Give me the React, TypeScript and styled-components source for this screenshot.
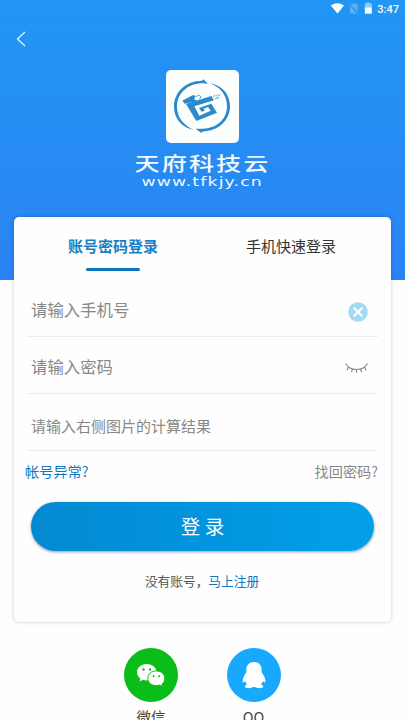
import React from "react";
import styled, { createGlobalStyle } from "styled-components";

const GlobalStyle = createGlobalStyle`
  * { box-sizing: border-box; }
  html, body { margin: 0; padding: 0; height: 720px; overflow: hidden; background: #fff; }
  body { font-family: "Noto Sans CJK SC", "Noto Sans", sans-serif; }
  button { font-family: inherit; padding: 0; border: 0; background: none; }
  svg { display: block; }
`;

const Screen = styled.div`
  width: 405px;
  height: 720px;
  overflow: hidden;
  background: #fefefe;
`;

const Header = styled.header`
  height: 280px;
  display: flex;
  flex-direction: column;
  align-items: center;
  background: linear-gradient(180deg, #2196f3 0%, #2a83f4 100%);
`;

const StatusBar = styled.div`
  align-self: stretch;
  height: 18px;
  display: flex;
  justify-content: flex-end;
  padding-right: 6px;
`;

const Clock = styled.span`
  color: #f4faff;
  font: 500 11px/19px Roboto, sans-serif;
  margin-left: 4px;
`;

const NavBar = styled.nav`
  align-self: stretch;
  height: 42px;
  display: flex;
  align-items: center;
  padding-left: 16px;
`;

const LogoTile = styled.div`
  width: 73px;
  height: 73px;
  margin-top: 10px;
  flex: none;
  border-radius: 5px;
  background: #fdfefe;
`;

const BrandName = styled.div`
  height: 24px;
  margin-top: 8px;
  color: #f3f9ff;
  font-size: 19px;
  font-weight: 500;
  line-height: 24px;
  letter-spacing: 1.6px;
  margin-right: -1px;
  white-space: nowrap;
  transform: scaleX(1.32);
`;

const BrandUrl = styled.div`
  height: 14px;
  color: #f0f7ff;
  font: 12px/14px "DejaVu Sans", sans-serif;
  letter-spacing: 0.8px;
  white-space: nowrap;
  transform: scaleX(1.44);
`;

const Card = styled.main`
  position: relative;
  width: 377px;
  height: 405px;
  margin: -63px 14px 0;
  border-radius: 5px;
  background: #fefefe;
  box-shadow: 0 0 3px 1px rgba(0, 0, 0, 0.13);
`;

const Tabs = styled.div`
  display: flex;
  height: 63px;
  padding: 0 11px 0 10px;
`;

const Tab = styled.button<{ $active?: boolean }>`
  flex: 1;
  display: flex;
  flex-direction: column;
  align-items: center;
  padding-top: 17px;
  font-size: 15px;
  line-height: 24px;
  font-weight: ${(p) => (p.$active ? 700 : 400)};
  color: ${(p) => (p.$active ? "#177fc6" : "#333")};
`;

const TabLine = styled.span`
  width: 54px;
  height: 3px;
  margin-top: 10px;
  border-radius: 2px;
  background: #0c75bf;
`;

const Field = styled.div<{ $size: number; $top?: number }>`
  display: flex;
  align-items: center;
  justify-content: space-between;
  height: 57px;
  margin: 0 13px;
  padding: ${(p) => p.$top || 0}px 10px 0 4px;
  border-bottom: 1px solid #ededed;
  color: #888;
  font-size: ${(p) => p.$size}px;
  line-height: 24px;
`;

const FieldButton = styled.button`
  padding-top: 5px;
`;

const Links = styled.div`
  display: flex;
  justify-content: space-between;
  height: 51px;
  padding: 8px 13px 0 11px;
  font-size: 14.2px;
  line-height: 24px;
`;

const Link = styled.a<{ $accent?: boolean }>`
  color: ${(p) => (p.$accent ? "#0c78be" : "#888")};
`;

const Submit = styled.button`
  display: block;
  width: 343px;
  height: 49px;
  margin: 0 0 0 17px;
  border-radius: 25px;
  background: linear-gradient(90deg, #0389d1, #02a0e9);
  box-shadow: 0 1px 3px rgba(0, 30, 70, 0.45);
  color: #fff;
  font-size: 19.5px;
  line-height: 48px;
  padding-bottom: 1px;
`;

const Signup = styled.p`
  margin: 18px 1px 0 0;
  text-align: center;
  color: #555;
  font-size: 12.7px;
  line-height: 24px;
`;

const Social = styled.footer`
  display: flex;
  justify-content: center;
  gap: 48.5px;
  margin: 26px 0.5px 0 0;
`;

const Provider = styled.div`
  width: 54px;
  display: flex;
  flex-direction: column;
  align-items: center;
  color: #444;
  font-size: 14.5px;
  line-height: 24px;
`;

const Disc = styled.div<{ $color: string }>`
  width: 54px;
  height: 54px;
  margin-bottom: 3px;
  border-radius: 50%;
  background: ${(p) => p.$color};
`;

const StatusIcons = () => (
  <svg width="43" height="18" viewBox="330 0 43 18">
    <path d="M330.8 5.5Q337.5 1 344 5.5L337.5 13.6Z" fill="#fff" />
    <path d="M350 5L352 3.8H357.5V13.5H350Z" fill="#5db2f7" />
    <path d="M349.5 4.5L358.5 14" stroke="#2495f3" strokeWidth="1.4" />
    <path d="M366.5 2.5h3v1h2.3V8h-7V3.5h1.7Z" fill="#8ecaf9" />
    <path d="M364.8 7.5h7V13.7h-7Z" fill="#fff" />
  </svg>
);

const BackIcon = () => (
  <svg width="11" height="16" viewBox="0 0 11 16">
    <path d="M9 1L1.5 8L9 15" fill="none" stroke="#e8f5ff" strokeWidth="1.25" />
  </svg>
);

const BrandMark = () => (
  <svg width="73" height="73" viewBox="123 29 219 219" fill="#2b8bca">
    <path d="M249 70L235 57L231 61C181 61 147 96 147 139C147 174 169 201 207 209C177 196 156 171 156 139C156 98 190 68 235 69Z" />
    <path d="M254 69C285 79 306 105 306 137C306 176 277 204 232 205L212 205L229 218L232 214C282 211 315 180 315 137C315 103 292 75 254 69Z" />
    <path d="M172 121L204 104L212 107L207 117L217 120L207 125L179 130Z" />
    <path d="M183 131L259 107L267 120L208 138L223 166L257 151L249 140L236 145L239 151L230 154L222 143L259 130L276 157L214 182Z" />
    <path d="M213 109L221 104L228 109L223 117M264 110L270 104M273 109L279 102M281 108L285 102M270 115L282 112" fill="none" stroke="#2b8bca" strokeWidth="2.5" />
  </svg>
);

const ClearIcon = () => (
  <svg width="20" height="20" viewBox="0 0 20 20">
    <circle cx="10" cy="10" r="9.8" fill="#a2d9f3" />
    <path d="M6.2 6.2L13.8 13.8M13.8 6.2L6.2 13.8" stroke="#fff" strokeWidth="2.2" strokeLinecap="round" />
  </svg>
);

const ClosedEyeIcon = () => (
  <svg width="23" height="12" viewBox="0 0 23 12" fill="none" stroke="#888" strokeWidth="1.1">
    <path d="M.5 .5C5 8.5 18 8.5 22.5 .5M3.4 4L2 7.2M7.4 6L6.6 9.2M11.5 6.5V9.8M15.6 6L16.4 9.2M19.6 4L21 7.2" />
  </svg>
);

const WechatIcon = () => (
  <svg width="54" height="54" viewBox="0 0 54 54" fill="#fff">
    <path d="M22.7 16C17 16 13 19.8 13 24.3C13 26.9 14.3 29.1 16.4 30.6L15.6 33.4L19 31.7Q20.8 32.4 23 32.4C28.5 32.4 32.6 28.8 32.6 24.3C32.6 19.8 28.5 16 22.7 16Z" />
    <path d="M32.2 22.9C27.4 22.9 23.8 26 23.8 30.2C23.8 34.5 27.4 37.6 32.2 37.6Q34.1 37.6 35.7 37L38.7 38.5L38 36C39.8 34.7 40.8 32.6 40.8 30.2C40.8 26 37.2 22.9 32.2 22.9Z" stroke="#0abd18" strokeWidth="1" />
    <g fill="#0abd18"><circle cx="19.5" cy="21.5" r="1.2" /><circle cx="26" cy="21.5" r="1.2" /><circle cx="29.6" cy="28.2" r="1" /><circle cx="35.2" cy="28.2" r="1" /></g>
  </svg>
);

const QqIcon = () => (
  <svg width="54" height="54" viewBox="0 0 54 54" fill="#fff">
    <path d="M27 14C22.4 14 19.4 17.2 19.4 21.4V24.2C17.2 27 15.7 30.5 15.7 33.2C15.7 34.9 16.6 34.9 18.1 33Q18.6 34.9 20 36.4C18 37.2 17.6 38.4 18.2 39.3C19.6 40.7 24.8 40.2 27 38.7C29.2 40.2 34.6 40.7 36 39.3C36.6 38.4 36 37.2 34 36.4Q35.4 34.9 35.9 33C37.4 34.9 38.4 34.9 38.4 33.2C38.4 30.5 36.8 27 34.6 24.2V21.4C34.6 17.2 31.6 14 27 14Z" />
  </svg>
);

export default function App() {
  return (
    <Screen>
      <GlobalStyle />
      <Header>
        <StatusBar><StatusIcons /><Clock>3:47</Clock></StatusBar>
        <NavBar><BackIcon /></NavBar>
        <LogoTile><BrandMark /></LogoTile>
        <BrandName>天府科技云</BrandName>
        <BrandUrl>www.tfkjy.cn</BrandUrl>
      </Header>
      <Card>
        <Tabs>
          <Tab $active>账号密码登录<TabLine /></Tab>
          <Tab>手机快速登录</Tab>
        </Tabs>
        <section>
          <Field $size={16.4} $top={2}><span>请输入手机号</span><FieldButton><ClearIcon /></FieldButton></Field>
          <Field $size={16.4} $top={2}><span>请输入密码</span><FieldButton><ClosedEyeIcon /></FieldButton></Field>
          <Field $size={15} $top={8}><span>请输入右侧图片的计算结果</span></Field>
        </section>
        <Links><Link $accent>帐号异常?</Link><Link>找回密码?</Link></Links>
        <Submit>登 录</Submit>
        <Signup>没有账号，<Link $accent>马上注册</Link></Signup>
      </Card>
      <Social>
        <Provider><Disc $color="#0abd18"><WechatIcon /></Disc>微信</Provider>
        <Provider><Disc $color="#19a9fc"><QqIcon /></Disc>QQ</Provider>
      </Social>
    </Screen>
  );
}
